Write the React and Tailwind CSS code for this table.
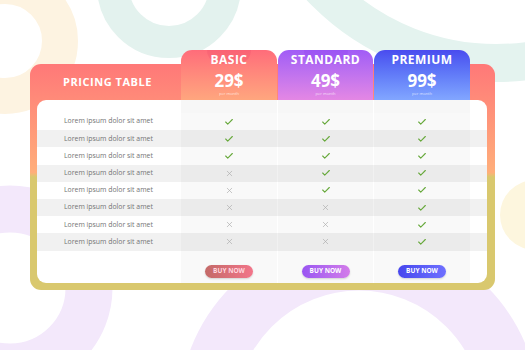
import React from "react";
import { Check, X } from "lucide-react";

const plans = [
    { name: "BASIC", price: "29$", tab: "from-[#ff6c7a] to-[#ffa67e]", btn: "from-[#c46a68] to-[#f2758a] text-[#ffd6df]", glow: "bg-[#f04f6a]/30" },
    { name: "STANDARD", price: "49$", tab: "from-[#a15cf6] to-[#e487e4]", btn: "from-[#9a55f2] to-[#d37ce9] text-white", glow: "bg-[#8a3cf0]/25" },
    { name: "PREMIUM", price: "99$", tab: "from-[#4a4bef] to-[#82a6ff]", btn: "from-[#4746ee] to-[#6f70ff] text-white", glow: "" },
];

const features = [
    [1, 1, 1],
    [1, 1, 1],
    [1, 1, 1],
    [0, 1, 1],
    [0, 1, 1],
    [0, 0, 1],
    [0, 0, 1],
    [0, 0, 1],
];

const widths = ["w-[96px]", "w-[95px]", "w-[96px]"];

const Backdrop = () => (
    <svg className="absolute inset-0" width="525" height="350" viewBox="0 0 525 350">
        <circle cx="5" cy="41" r="55" fill="none" stroke="#fdf3e1" strokeWidth="36" />
        <circle cx="169" cy="-14" r="56" fill="none" stroke="#e3f2ee" strokeWidth="32" />
        <circle cx="496" cy="-178" r="241" fill="none" stroke="#e4f3ef" strokeWidth="38" />
        <circle cx="10" cy="288" r="79" fill="none" stroke="#f3e8fb" strokeWidth="47" />
        <circle cx="359" cy="414" r="152" fill="none" stroke="#f3e8fb" strokeWidth="57" />
        <circle cx="535" cy="215" r="35" fill="#fdf6de" />
    </svg>
);

const Row = ({ children, label, className }) => (
    <div className={`flex ${className}`}>
        <div className="w-[144px] pl-[27px] flex items-center text-[6.9px] text-[#747474]">{label}</div>
        <div className="flex gap-px">{children}</div>
        <div className="flex-1" />
    </div>
);

export default function App() {
    return (
        <div className="relative w-[525px] h-[350px] overflow-hidden bg-white" style={{ fontFamily: '"Open Sans", "Liberation Sans", sans-serif' }}>
            <Backdrop />

            <div className="relative pt-[64px] pl-[30px]">
                <div className="w-[465px] h-[226px] rounded-[11px] bg-linear-to-b from-[#ff7878] via-[#ffae7a] via-48% to-[#d9c86e] to-50% pl-[7px] pr-[8px] pb-[7px] flex flex-col">
                    {/* header */}
                    <div className="h-[36px] flex items-end -ml-[7px]">
                        <div className="w-[151px] h-[36px] flex items-center justify-center pl-[4px]">
                            <span className="text-white font-bold text-[11px] tracking-[0.05em]">PRICING TABLE</span>
                        </div>
                        <div className="flex gap-px">
                            {plans.map((p, i) => (
                                <div key={p.name} className={`${widths[i]} h-[50px] rounded-t-[11px] bg-linear-to-b ${p.tab} relative overflow-hidden flex flex-col items-center text-white`}>
                                    {p.glow && <div className={`absolute left-1/2 -translate-x-1/2 -top-[14px] w-[44px] h-[28px] rounded-full ${p.glow}`} />}
                                    <span className="relative mt-[3px] text-[12px] font-bold tracking-[0.04em] leading-[14px]">{p.name}</span>
                                    <span className="relative text-[17px] font-bold leading-[18px] mt-[5px]">{p.price}</span>
                                    <span className="relative text-[4px] leading-[6px] mt-[1px] opacity-70">per month</span>
                                </div>
                            ))}
                        </div>
                    </div>

                    {/* panel */}
                    <div className="flex-1 bg-white rounded-[9px] overflow-hidden flex flex-col">
                        <Row label="" className="h-[13px]">
                            {plans.map((p, i) => <div key={i} className={`${widths[i]} bg-black/[0.03]`} />)}
                        </Row>
                        {features.map((f, r) => (
                            <Row key={r} label="Lorem ipsum dolor sit amet" className={`h-[17.2px] ${r % 2 ? "bg-[#f1f1f1]" : ""}`}>
                                {f.map((v, i) => (
                                    <div key={i} className={`${widths[i]} bg-black/[0.025] flex items-center justify-center`}>
                                        {v ? <Check size={10} strokeWidth={2.6} color="#66a83a" /> : <X size={9} strokeWidth={1.7} color="#aaaaaa" />}
                                    </div>
                                ))}
                            </Row>
                        ))}
                        <Row label="" className="flex-1">
                            {plans.map((p, i) => (
                                <div key={i} className={`${widths[i]} bg-black/[0.025] flex justify-center pt-[14px]`}>
                                    <div className={`w-[48px] h-[13px] rounded-full bg-linear-to-r ${p.btn} flex items-center justify-center text-[6.5px] font-bold shadow-[0_1px_2px_rgba(0,0,0,0.15)]`}>
                                        BUY NOW
                                    </div>
                                </div>
                            ))}
                        </Row>
                    </div>
                </div>
            </div>
        </div>
    );
}
